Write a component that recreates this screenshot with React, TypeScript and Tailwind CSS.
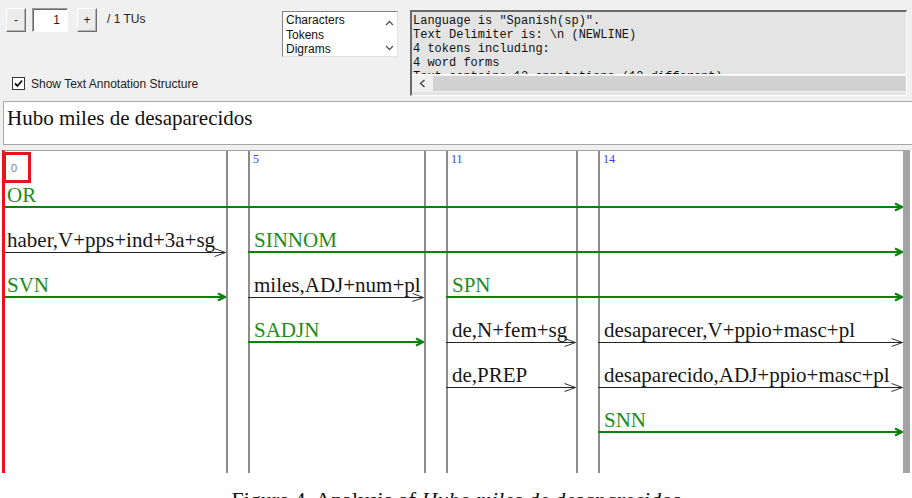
import React from "react";

const serif = { fontFamily: '"Liberation Serif", "Times New Roman", serif' };
const sans = { fontFamily: '"Liberation Sans", Arial, sans-serif' };
const mono = { fontFamily: '"Liberation Mono", "Courier New", monospace' };

type AnnProps = {
  label: string;
  green?: boolean;
  place: string;
  pad: string;
};

function GreenArrow() {
  return (
    <svg width="10" height="10" viewBox="0 0 10 10" className="shrink-0">
      <line x1="0" y1="5" x2="9" y2="5" stroke="#0e800e" strokeWidth="2" />
      <polyline points="2,1.5 9,5 2,8.5" fill="none" stroke="#0e800e" strokeWidth="2.2" />
    </svg>
  );
}

function BlackArrow() {
  return (
    <svg width="12" height="10" viewBox="0 0 12 10" className="shrink-0">
      <line x1="0" y1="5.5" x2="11.5" y2="5.5" stroke="#222" strokeWidth="1" />
      <polyline points="0.5,1.5 11.5,5.5 0.5,9.5" fill="none" stroke="#333" strokeWidth="1" />
    </svg>
  );
}

function Ann({ label, green, place, pad }: AnnProps) {
  return (
    <div className={`${place} relative z-10 flex flex-col justify-end`}>
      <div
        className={`whitespace-nowrap text-[21px] leading-[24px] mb-[-5px] ${pad} ${
          green ? "text-[#1c8c1c]" : "text-[#161616]"
        }`}
        style={serif}
      >
        {label}
      </div>
      <div className="h-[10px] flex items-center">
        {green ? (
          <>
            <div className="flex-1 h-[2px] bg-[#0e800e]" />
            <GreenArrow />
          </>
        ) : (
          <>
            <div className="flex-1 h-px bg-[#222]" />
            <BlackArrow />
          </>
        )}
      </div>
    </div>
  );
}

function Sep({ place }: { place: string }) {
  return <div className={`${place} row-start-1 row-end-9 bg-[#8c8c8c]`} />;
}

function Btn({ label }: { label: string }) {
  return (
    <div className="w-[20px] h-[24px] bg-[#ececec] border border-t-white border-l-white border-b-[#6e6e6e] border-r-[#6e6e6e] shadow-[inset_-1px_-1px_0_#b4b4b4] flex items-center justify-center text-[12px] text-[#222]">
      {label}
    </div>
  );
}

export default function App() {
  return (
    <div className="w-[912px] h-[498px] bg-white overflow-hidden" style={sans}>
      {/* top toolbar */}
      <div className="h-[98px] bg-[#f0f0f0] flex">
        <div className="w-[276px] pl-[6px] pt-[8px] flex flex-col">
          <div className="flex items-center h-[24px]">
            <Btn label="-" />
            <div className="ml-[6px] w-[36px] h-[24px] bg-white border border-t-[#9a9a9a] border-l-[#9a9a9a] border-b-white border-r-white shadow-[inset_1px_1px_0_#6a6a6a] flex items-center justify-end pr-[7px] text-[12px] text-[#222]">
              1
            </div>
            <div className="ml-[9px]">
              <Btn label="+" />
            </div>
            <span className="ml-[10px] text-[12px] text-[#222] -mt-[2px]">/ 1 TUs</span>
          </div>
          <div className="mt-[45px] flex items-center h-[13px] pl-[6px]">
            <div className="w-[13px] h-[13px] bg-white border border-[#333] flex items-center justify-center">
              <svg width="9" height="9" viewBox="0 0 9 9">
                <polyline points="1,4.5 3.5,7 8,1.5" fill="none" stroke="#111" strokeWidth="1.8" />
              </svg>
            </div>
            <span className="ml-[6px] text-[12px] text-[#222]">
              Show Text Annotation Structure
            </span>
          </div>
        </div>

        {/* list box */}
        <div className="ml-[6px] mt-[11px] w-[116px] h-[46px] bg-white border border-t-[#828282] border-l-[#828282] border-b-[#e3e3e3] border-r-[#e3e3e3] flex">
          <div className="flex-1 pl-[3px] pt-[1px] text-[12px] leading-[14.5px] text-[#111]">
            <div>Characters</div>
            <div>Tokens</div>
            <div>Digrams</div>
          </div>
          <div className="w-[16px] flex flex-col items-center pt-[8px] gap-[19px]">
            <svg width="9" height="6" viewBox="0 0 9 6" className="shrink-0">
              <polyline points="1,5 4.5,1.5 8,5" fill="none" stroke="#555" strokeWidth="1.3" />
            </svg>
            <svg width="9" height="6" viewBox="0 0 9 6" className="shrink-0">
              <polyline points="1,1 4.5,4.5 8,1" fill="none" stroke="#555" strokeWidth="1.3" />
            </svg>
          </div>
        </div>

        {/* info text box */}
        <div className="ml-[12px] mt-[10px] w-[497px] h-[86px] bg-[#e4e4e4] border-t-2 border-l-2 border-t-[#6b6b6b] border-l-[#6b6b6b] border-b border-r border-b-white border-r-white flex flex-col">
          <div
            className="h-[63px] overflow-hidden pl-[1px] pt-[2px] text-[12px] leading-[14px] text-[#111] whitespace-pre border-b border-white"
            style={mono}
          >
            <div>Language is "Spanish(sp)".</div>
            <div>Text Delimiter is: \n (NEWLINE)</div>
            <div>4 tokens including:</div>
            <div>4 word forms</div>
            <div>Text contains 12 annotations (12 different).</div>
          </div>
          <div className="h-[17px] flex bg-[#f0f0f0]">
            <div className="w-[21px] flex items-center justify-center">
              <svg width="7" height="9" viewBox="0 0 7 9">
                <polyline points="5.5,1 1.5,4.5 5.5,8" fill="none" stroke="#444" strokeWidth="1.4" />
              </svg>
            </div>
            <div className="flex-1 my-[1px] bg-[#d2d2d2]" />
          </div>
        </div>
      </div>

      {/* sentence box */}
      <div className="bg-[#f0f0f0] pt-[3px] pb-[4px] pl-[3px]">
        <div
          className="h-[44px] bg-white border border-[#a6a6a6] border-r-0 pl-[3px] pt-[4px] text-[21px] leading-[24px] text-[#111]"
          style={serif}
        >
          Hubo miles de desaparecidos
        </div>
      </div>

      {/* annotation canvas */}
      <div className="h-[1px] bg-[#f0f0f0]" />
      <div className="pl-[2px] pr-[2px]">
        <div className="relative border-t border-t-[#a0a0a0] border-l-[3px] border-l-[#e8141c] bg-white grid grid-cols-[221px_2px_20px_2px_174px_2px_20px_2px_128px_2px_20px_2px_303px_7px] grid-rows-[16px_45px_45px_45px_45px_45px_45px_36px]">
          <Sep place="col-start-2 col-end-3" />
          <Sep place="col-start-4 col-end-5" />
          <Sep place="col-start-6 col-end-7" />
          <Sep place="col-start-8 col-end-9" />
          <Sep place="col-start-10 col-end-11" />
          <Sep place="col-start-12 col-end-13" />
          <div className="col-start-14 col-end-15 row-start-1 row-end-9 bg-[#a3a3a3]" />

          {/* offsets */}
          <div className="col-start-4 col-end-6 row-start-1 pl-[5px] pt-[1px] text-[12px] leading-[14px] text-[#3a3aff]" style={serif}>
            5
          </div>
          <div className="col-start-8 col-end-10 row-start-1 pl-[5px] pt-[1px] text-[12px] leading-[14px] text-[#3a3aff]" style={serif}>
            11
          </div>
          <div className="col-start-12 col-end-14 row-start-1 pl-[5px] pt-[1px] text-[12px] leading-[14px] text-[#3a3aff]" style={serif}>
            14
          </div>

          {/* selected token marker */}
          <div className="absolute left-[-2px] top-[1px] w-[28px] h-[31px] border-[3px] border-[#e8141c] z-20 pl-[5px] pt-[7px] text-[11px] leading-[12px] text-[#808080]">
            0
          </div>

          {/* row 1 */}
          <Ann place="col-start-1 col-end-14 row-start-2" label="OR" green pad="pl-[2px]" />
          {/* row 2 */}
          <Ann place="col-start-1 col-end-2 row-start-3" label="haber,V+pps+ind+3a+sg" pad="pl-[2px]" />
          <Ann place="col-start-4 col-end-14 row-start-3" label="SINNOM" green pad="pl-[6px]" />
          {/* row 3 */}
          <Ann place="col-start-1 col-end-2 row-start-4" label="SVN" green pad="pl-[2px]" />
          <Ann place="col-start-4 col-end-6 row-start-4" label="miles,ADJ+num+pl" pad="pl-[6px]" />
          <Ann place="col-start-8 col-end-14 row-start-4" label="SPN" green pad="pl-[6px]" />
          {/* row 4 */}
          <Ann place="col-start-4 col-end-6 row-start-5" label="SADJN" green pad="pl-[6px]" />
          <Ann place="col-start-8 col-end-10 row-start-5" label="de,N+fem+sg" pad="pl-[6px]" />
          <Ann place="col-start-12 col-end-14 row-start-5" label="desaparecer,V+ppio+masc+pl" pad="pl-[6px]" />
          {/* row 5 */}
          <Ann place="col-start-8 col-end-10 row-start-6" label="de,PREP" pad="pl-[6px]" />
          <Ann place="col-start-12 col-end-14 row-start-6" label="desaparecido,ADJ+ppio+masc+pl" pad="pl-[6px]" />
          {/* row 6 */}
          <Ann place="col-start-12 col-end-14 row-start-7" label="SNN" green pad="pl-[6px]" />
        </div>
      </div>

      {/* caption */}
      <div className="mt-[15px] text-center text-[22px] leading-[24px] text-[#111]" style={serif}>
        Figure 4. Analysis of <i>Hubo miles de desaparecidos</i>
      </div>
    </div>
  );
}
